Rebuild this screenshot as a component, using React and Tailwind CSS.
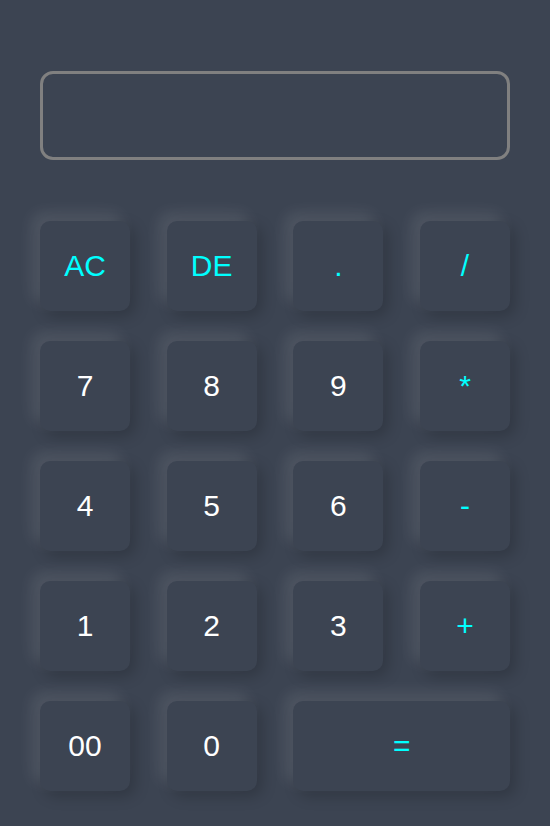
export default function App() {
  const btn =
    "h-[90px] rounded-[10px] bg-[#3c4452] flex items-center justify-center pb-[1px] text-[30px] shadow-[-8px_-8px_15px_rgba(255,255,255,0.1),5px_5px_15px_rgba(0,0,0,0.2)]";
  const rows = [
    [["AC", 1], ["DE", 1], [".", 1], ["/", 1]],
    [["7", 0], ["8", 0], ["9", 0], ["*", 1]],
    [["4", 0], ["5", 0], ["6", 0], ["-", 1]],
    [["1", 0], ["2", 0], ["3", 0], ["+", 1]],
  ];
  return (
    <div
      className="min-h-screen w-full bg-[#3c4452] px-[40px] pt-[71px]"
      style={{ fontFamily: '"Liberation Sans", Arial, sans-serif' }}
    >
      <div className="h-[89px] w-full rounded-[13px] border-[3px] border-[#808080]" />
      <div className="mt-[61px] grid grid-cols-[90px_90px_90px_90px] justify-between gap-y-[30px]">
        {rows.flat().map(([t, op], i) => (
          <div
            key={i}
            className={`${btn} w-[90px] ${op ? "text-[#00ffff]" : "text-white"}`}
          >
            {t}
          </div>
        ))}
        <div className={`${btn} w-[90px] text-white`}>00</div>
        <div className={`${btn} w-[90px] text-white`}>0</div>
        <div className={`${btn} col-span-2 text-[#00ffff]`}>=</div>
      </div>
    </div>
  );
}
